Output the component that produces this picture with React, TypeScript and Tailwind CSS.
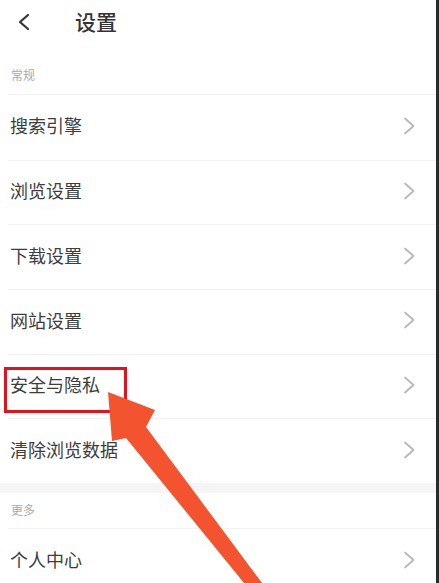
const rows = ['搜索引擎', '浏览设置', '下载设置', '网站设置', '安全与隐私', '清除浏览数据'];

const Chevron = () => (
  <svg width="14" height="18" viewBox="0 0 14 18" fill="none" className="shrink-0">
    <path d="M3 1.5 L11.5 9 L3 16.5" stroke="#b8b8b8" strokeWidth="1.8" strokeLinecap="round" strokeLinejoin="round" />
  </svg>
);

const Row = ({ label, first }: { label: string; first?: boolean }) => (
  <div className={`ml-2 flex h-[64.67px] items-center justify-between pb-[3px] pl-[2px] pr-[20px] ${first ? '' : 'border-t border-[#f2f2f2]'}`}>
    <span className="text-[18px] text-[#3d3d3d]">{label}</span>
    <Chevron />
  </div>
);

export default function App() {
  return (
    <div
      className="relative h-[583px] w-[439px] overflow-hidden border-r-[3px] border-[#2a2a2a] bg-white"
      style={{ fontFamily: '"Noto Sans CJK SC", "Noto Sans", sans-serif' }}
    >
      <header className="flex h-[44px] items-center">
        <div className="flex w-[75px] items-center pl-[17px]">
          <svg width="14" height="18" viewBox="0 0 14 18" fill="none">
            <path d="M11 2 L3 9 L11 16" stroke="#333" strokeWidth="2.2" strokeLinecap="round" strokeLinejoin="round" />
          </svg>
        </div>
        <h1 className="text-[21px] font-medium text-[#333]">设置</h1>
      </header>

      <div className="flex h-[50px] items-end pb-[10px] pl-[11px] text-[12px] text-[#aaa]">常规</div>
      <div className="ml-2 border-t border-[#f2f2f2]" />
      {rows.map((r, i) => (
        <Row key={r} label={r} first={i === 0} />
      ))}

      <div className="h-[10px] bg-[#f5f5f5]" />
      <div className="flex h-[35px] items-center pl-[11px] text-[12px] text-[#aaa]">更多</div>
      <div className="ml-2 border-t border-[#f2f2f2]" />
      <Row label="个人中心" first />

      {/* annotation */}
      <div className="absolute left-[4px] top-[367px] h-[46px] w-[123px] border-[3px] border-[#e3121c]" />
      <svg className="absolute left-0 top-0" width="439" height="583" viewBox="0 0 439 583">
        <polygon
          points="108,392 155,410 146,427 262,583 244,583 126,438 112,441"
          fill="#f4532f"
        />
      </svg>
    </div>
  );
}
